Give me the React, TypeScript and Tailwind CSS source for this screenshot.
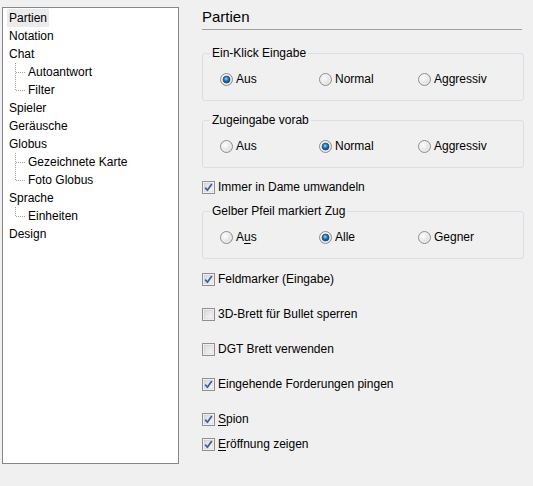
import React from 'react';

const font = { fontFamily: '"Liberation Sans", Arial, sans-serif' };

type TreeItem = { label: string; children?: string[] };

const tree: TreeItem[] = [
  { label: 'Partien' },
  { label: 'Notation' },
  { label: 'Chat', children: ['Autoantwort', 'Filter'] },
  { label: 'Spieler' },
  { label: 'Geräusche' },
  { label: 'Globus', children: ['Gezeichnete Karte', 'Foto Globus'] },
  { label: 'Sprache', children: ['Einheiten'] },
  { label: 'Design' },
];

function Connector({ last }: { last: boolean }) {
  return (
    <svg width="12" height="18" viewBox="0 0 12 18" className="shrink-0">
      <line x1="0.5" y1="0" x2="0.5" y2={last ? 9 : 18} stroke="#a0a0a0" strokeDasharray="1 1" />
      <line x1="1" y1="9.5" x2="11" y2="9.5" stroke="#a0a0a0" strokeDasharray="1 1" />
    </svg>
  );
}

function Radio({ checked }: { checked?: boolean }) {
  return (
    <svg width="13" height="13" viewBox="0 0 13 13" className="shrink-0">
      <defs>
        <radialGradient id="rbg" cx="0.4" cy="0.4" r="0.7">
          <stop offset="0" stopColor="#ffffff" />
          <stop offset="1" stopColor="#cfcfcf" />
        </radialGradient>
        <radialGradient id="rdot" cx="0.45" cy="0.4" r="0.6">
          <stop offset="0" stopColor="#9ee0ff" />
          <stop offset="0.45" stopColor="#1f82c8" />
          <stop offset="1" stopColor="#11406e" />
        </radialGradient>
      </defs>
      <circle cx="6.5" cy="6.5" r="6" fill="url(#rbg)" stroke="#8f8f8f" />
      <circle cx="6.5" cy="6.5" r="4.6" fill="none" stroke="#ffffff" strokeOpacity="0.6" />
      {checked && <circle cx="6.5" cy="6.5" r="3.5" fill="url(#rdot)" stroke="#1c3d62" strokeWidth="0.6" />}
    </svg>
  );
}

function Check({ checked }: { checked?: boolean }) {
  return (
    <svg width="13" height="13" viewBox="0 0 13 13" className="shrink-0">
      <defs>
        <linearGradient id="cbg" x1="0" y1="0" x2="1" y2="1">
          <stop offset="0" stopColor="#d9d9d9" />
          <stop offset="1" stopColor="#f8f8f8" />
        </linearGradient>
      </defs>
      <rect x="0.5" y="0.5" width="12" height="12" fill="#ffffff" stroke="#8f8f8f" />
      <rect x="2" y="2" width="9" height="9" fill="url(#cbg)" stroke="#c0c0c0" strokeWidth="0.5" />
      {checked && (
        <path d="M3.2 6.6 L5.4 9.3 L9.8 2.9" fill="none" stroke="#3f5da3" strokeWidth="1.7" strokeLinejoin="round" />
      )}
    </svg>
  );
}

function RadioGroup({ title, options, selected, mt }: { title: string; options: React.ReactNode[]; selected: number; mt: string }) {
  return (
    <fieldset className={`${mt} border border-[#d5dfe5] rounded-[3px] pb-[13px]`}>
      <legend className="ml-[7px] px-[2px] leading-[14px]">{title}</legend>
      <div className="mt-[11px] pl-[17px] grid grid-cols-[99px_99px_99px] h-[16px]">
        {options.map((o, i) => (
          <label key={i} className="flex items-center gap-[3px] leading-[16px]">
            <Radio checked={i === selected} />
            <span>{o}</span>
          </label>
        ))}
      </div>
    </fieldset>
  );
}

function CheckRow({ label, checked, mt }: { label: React.ReactNode; checked?: boolean; mt: string }) {
  return (
    <label className={`${mt} flex items-center gap-[3px] h-[16px] leading-[16px]`}>
      <Check checked={checked} />
      <span>{label}</span>
    </label>
  );
}

export default function App() {
  return (
    <div className="w-[533px] h-[486px] bg-[#f0f0f0] flex items-start text-black overflow-hidden" style={font}>
      {/* Tree */}
      <div className="ml-[2px] mt-[7px] w-[177px] h-[457px] pt-[1px] bg-white border border-[#828790] text-[12px]">
        {tree.map((item) => (
          <div key={item.label}>
            <div className="h-[18px] flex items-center pl-[4px]">
              <span className={`px-[2px] h-[18px] leading-[18px] ${item.label === 'Partien' ? 'bg-[#ebebeb]' : ''}`}>
                {item.label}
              </span>
            </div>
            {item.children?.map((c, i) => (
              <div key={c} className="h-[18px] flex items-center pl-[12px]">
                <Connector last={i === item.children!.length - 1} />
                <span className="pl-[1px] leading-[18px]">{c}</span>
              </div>
            ))}
          </div>
        ))}
      </div>

      {/* Settings */}
      <div className="ml-[23px] w-[322px] flex flex-col text-[12px]">
        <div className="w-[320px] pt-[8px] pb-[3px] border-b border-[#a0a0a0] text-[15px] leading-[18px]">Partien</div>

        <RadioGroup mt="mt-[16px]" title="Ein-Klick Eingabe" options={['Aus', 'Normal', 'Aggressiv']} selected={0} />
        <RadioGroup mt="mt-[12px]" title="Zugeingabe vorab" options={['Aus', 'Normal', 'Aggressiv']} selected={1} />

        <CheckRow mt="mt-[11px]" label="Immer in Dame umwandeln" checked />

        <RadioGroup
          mt="mt-[9px]"
          title="Gelber Pfeil markiert Zug"
          options={[<>A<u className="underline-offset-2">u</u>s</>, 'Alle', 'Gegner']}
          selected={1}
        />

        <CheckRow mt="mt-[12px]" label="Feldmarker (Eingabe)" checked />
        <CheckRow mt="mt-[19px]" label="3D-Brett für Bullet sperren" />
        <CheckRow mt="mt-[19px]" label="DGT Brett verwenden" />
        <CheckRow mt="mt-[19px]" label="Eingehende Forderungen pingen" checked />
        <CheckRow mt="mt-[19px]" label={<><u className="underline-offset-2">S</u>pion</>} checked />
        <CheckRow mt="mt-[9px]" label={<><u className="underline-offset-2">E</u>röffnung zeigen</>} checked />
      </div>
    </div>
  );
}
